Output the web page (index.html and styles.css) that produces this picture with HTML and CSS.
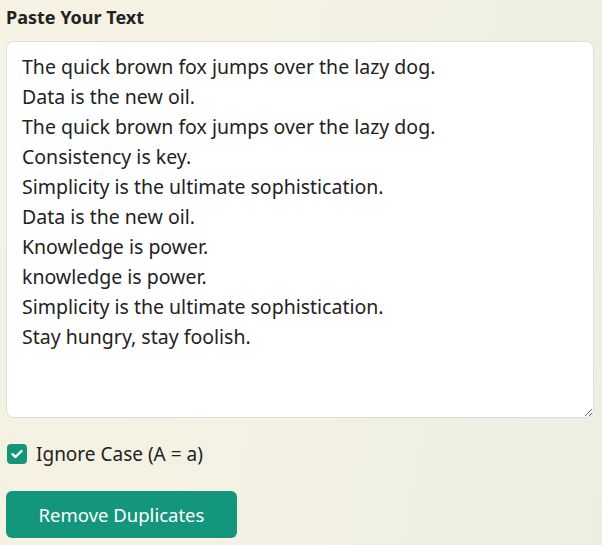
FILE: index.html
```html
<!DOCTYPE html>
<html>
<head>
<meta charset="utf-8">
<link rel="stylesheet" href="styles.css">
</head>
<body>
<div class="wrap">
  <label class="label" for="t">Paste Your Text</label>
  <textarea id="t" class="box">The quick brown fox jumps over the lazy dog.
Data is the new oil.
The quick brown fox jumps over the lazy dog.
Consistency is key.
Simplicity is the ultimate sophistication.
Data is the new oil.
Knowledge is power.
knowledge is power.
Simplicity is the ultimate sophistication.
Stay hungry, stay foolish.</textarea>
  <label class="check">
    <span class="tick"><svg width="12" height="10" viewBox="0 0 12 10"><path d="M1.5 5.2 L4.5 8 L10.5 2" fill="none" stroke="#fff" stroke-width="2.4" stroke-linecap="round" stroke-linejoin="round"/></svg></span>
    <span>Ignore Case (A = a)</span>
  </label>
  <div><button class="btn">Remove Duplicates</button></div>
</div>
</body>
</html>
```
FILE: styles.css
```css
html, body {
  margin: 0;
  height: 100%;
}
body {
  background: linear-gradient(100deg, #f6f2e4 0%, #f3f1e3 50%, #ebefe2 100%);
  font-family: "Noto Sans", "Open Sans", sans-serif;
  color: #222;
}
.wrap {
  padding: 5px 8px 0 6px;
  display: flex;
  flex-direction: column;
}
.label {
  font-weight: 700;
  font-size: 18px;
  line-height: 24px;
  color: #222;
  margin-bottom: 12px;
}
.box {
  box-sizing: border-box;
  width: 588px;
  height: 377px;
  border: 1px solid #dedede;
  border-radius: 8px;
  background: #fff;
  padding: 10px 15px;
  font-family: "Noto Sans", "Open Sans", sans-serif;
  font-size: 19.5px;
  line-height: 30px;
  color: #222;
  resize: vertical;
  outline: none;
}
.check {
  display: flex;
  align-items: center;
  gap: 9px;
  margin-top: 24px;
  padding-left: 1px;
  font-size: 19px;
  line-height: 24px;
  color: #222;
}
.tick {
  width: 20px;
  height: 20px;
  border-radius: 4px;
  background: #13957a;
  display: flex;
  align-items: center;
  justify-content: center;
}
.btn {
  margin-top: 25px;
  width: 231px;
  height: 47px;
  border: none;
  border-radius: 6px;
  background: #13967b;
  color: #fff;
  font-family: "Noto Sans", "Open Sans", sans-serif;
  font-size: 18.5px;
  cursor: pointer;
}
```
